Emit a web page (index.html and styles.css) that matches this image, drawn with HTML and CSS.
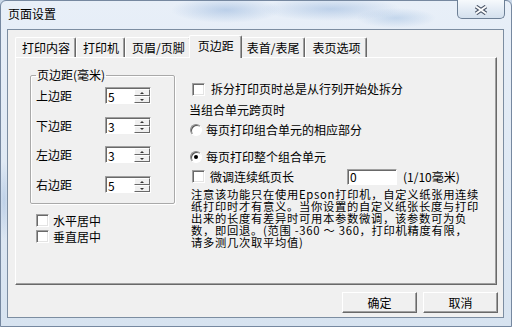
FILE: index.html
```html
<!DOCTYPE html>
<html lang="zh-CN">
<head>
<meta charset="utf-8">
<title>页面设置</title>
<link rel="stylesheet" href="styles.css">
</head>
<body>
<div class="window">
  <div class="titlebar">
    <span class="title">页面设置</span>
    <div class="close">
      <svg width="14" height="10" viewBox="0 0 14 10">
        <path d="M2 1.5 L12 8.5 M12 1.5 L2 8.5" stroke="#4a5567" stroke-width="4" fill="none"/>
        <path d="M2 1.5 L12 8.5 M12 1.5 L2 8.5" stroke="#ffffff" stroke-width="2" fill="none"/>
      </svg>
    </div>
  </div>
  <div class="client">
    <div class="tabs">
      <div class="tab">打印内容</div>
      <div class="tab">打印机</div>
      <div class="tab">页眉/页脚</div>
      <div class="tab active">页边距</div>
      <div class="tab">表首/表尾</div>
      <div class="tab">表页选项</div>
    </div>
    <div class="panel">
      <div class="left">
        <fieldset class="group">
          <legend>页边距(毫米)</legend>
          <div class="row"><span class="lbl">上边距</span><div class="spin"><span class="val">5</span><div class="spinbtns"><div class="sb"><span class="arr up"></span></div><div class="sb"><span class="arr down"></span></div></div></div></div>
          <div class="row"><span class="lbl">下边距</span><div class="spin"><span class="val">3</span><div class="spinbtns"><div class="sb"><span class="arr up"></span></div><div class="sb"><span class="arr down"></span></div></div></div></div>
          <div class="row"><span class="lbl">左边距</span><div class="spin"><span class="val">3</span><div class="spinbtns"><div class="sb"><span class="arr up"></span></div><div class="sb"><span class="arr down"></span></div></div></div></div>
          <div class="row"><span class="lbl">右边距</span><div class="spin"><span class="val">5</span><div class="spinbtns"><div class="sb"><span class="arr up"></span></div><div class="sb"><span class="arr down"></span></div></div></div></div>
        </fieldset>
        <div class="checks">
          <div class="check"><span class="box"></span><span>水平居中</span></div>
          <div class="check"><span class="box"></span><span>垂直居中</span></div>
        </div>
      </div>
      <div class="right">
        <div class="opt cb-row"><span class="box"></span><span>拆分打印页时总是从行列开始处拆分</span></div>
        <div class="opt caption">当组合单元跨页时</div>
        <div class="opt radio-row first"><span class="radio"></span><span>每页打印组合单元的相应部分</span></div>
        <div class="opt radio-row second"><span class="radio on"></span><span>每页打印整个组合单元</span></div>
        <div class="opt tune-row">
          <span class="tune-label"><span class="box"></span><span>微调连续纸页长</span></span>
          <span class="field">0</span>
          <span class="unit">(1/10毫米)</span>
        </div>
        <div class="note">注意该功能只在使用Epson打印机，自定义纸张用连续<br>纸打印时才有意义。当你设置的自定义纸张长度与打印<br>出来的长度有差异时可用本参数微调，该参数可为负<br>数，即回退。(范围 -360 ～ 360，打印机精度有限，<br>请多测几次取平均值)</div>
      </div>
    </div>
    <div class="buttons">
      <div class="btn">确定</div>
      <div class="btn">取消</div>
    </div>
  </div>
</div>
</body>
</html>
```

FILE: styles.css
```css
html, body {
  margin: 0;
  padding: 0;
}
body {
  width: 512px;
  height: 327px;
  overflow: hidden;
  background: #c9d7e8;
  font-family: "Noto Sans CJK SC", "Liberation Sans", sans-serif;
  font-size: 12px;
  color: #000;
}
.window {
  width: 512px;
  height: 327px;
  box-sizing: border-box;
  display: flex;
  flex-direction: column;
  padding: 0 7px 8px 6px;
  border: 1px solid #7688a0;
  border-radius: 6px 6px 0 0;
  background:
    radial-gradient(ellipse 55px 13px at 225px 9px, rgba(120,160,210,0.40), transparent),
    radial-gradient(ellipse 70px 12px at 330px 8px, rgba(120,160,210,0.38), transparent),
    radial-gradient(ellipse 40px 10px at 395px 17px, rgba(130,170,215,0.35), transparent),
    radial-gradient(ellipse 6px 40px at 3px 200px, rgba(130,165,210,0.35), transparent),
    linear-gradient(#e8eff8, #d7e3f0);
}
.titlebar {
  height: 28px;
  display: flex;
  justify-content: space-between;
  align-items: flex-start;
  flex: none;
}
.title {
  line-height: 12px;
  margin-top: 7px;
  padding-left: 1px;
}
.close {
  width: 48px;
  height: 19px;
  box-sizing: border-box;
  margin-top: -1px;
  margin-right: -1px;
  border: 1px solid #6d7f95;
  border-top: none;
  border-radius: 0 0 5px 5px;
  background: linear-gradient(#f6f9fc, #e4ecf5 50%, #d4e0ed);
  display: flex;
  justify-content: center;
  align-items: center;
  padding-top: 2px;
}
.client {
  flex: 1;
  border: 1px solid #7c8da1;
  background: #f0f0f0;
  display: flex;
  flex-direction: column;
}
.tabs {
  display: flex;
  align-items: flex-end;
  height: 22px;
  margin-top: 5px;
  padding-left: 7px;
  flex: none;
}
.tab {
  height: 20px;
  box-sizing: border-box;
  padding: 0 5px 0 6px;
  line-height: 19px;
  border-top: 1px solid #fff;
  border-left: 1px solid #fff;
  border-right: 1px solid #696969;
  box-shadow: inset -1px 0 0 #a0a0a0;
  border-radius: 2px 2px 0 0;
  background: #f0f0f0;
  white-space: nowrap;
}
.tab.active {
  height: 23px;
  margin: 0 -2px -1px -2px;
  padding: 0 7px 0 8px;
  line-height: 20px;
  position: relative;
  z-index: 1;
}
.panel {
  margin-left: 7px;
  width: 482px;
  height: 228px;
  box-sizing: border-box;
  border-top: 1px solid #fff;
  border-left: 1px solid #fff;
  border-right: 1px solid #696969;
  border-bottom: 1px solid #696969;
  box-shadow: inset -1px -1px 0 #a0a0a0;
  display: flex;
  padding-left: 14px;
  flex: none;
}
.left {
  width: 145px;
  flex: none;
  padding-top: 11px;
}
.group {
  margin: 0;
  padding: 0 0 10px 5px;
  border: 1px solid #a9a9a9;
  box-shadow: inset 1px 1px 0 #fff, 1px 1px 0 #fff;
  border-radius: 2px;
  min-width: 0;
  width: 145px;
  box-sizing: border-box;
}
.group legend {
  padding: 0 1px;
  margin: 0;
  line-height: 12px;
}
.row {
  display: flex;
  align-items: center;
  height: 17px;
  margin-top: 12.7px;
}
.row:first-of-type {
  margin-top: 6px;
}
.lbl {
  width: 69px;
  line-height: 17px;
}
.spin {
  width: 46px;
  height: 17px;
  box-sizing: border-box;
  border: 1px solid;
  border-color: #a0a0a0 #fff #fff #a0a0a0;
  box-shadow: inset 1px 1px 0 #696969;
  background: #fff;
  display: flex;
  padding: 1px 0 0 1px;
}
.val {
  flex: 1;
  line-height: 15px;
  padding-left: 1px;
}
.spinbtns {
  width: 16px;
  display: flex;
  flex-direction: column;
}
.sb {
  flex: 1;
  box-sizing: border-box;
  border: 1px solid;
  border-color: #fff #696969 #696969 #fff;
  background: #f0f0f0;
  display: flex;
  justify-content: center;
  align-items: center;
}
.arr {
  width: 0;
  height: 0;
  border-left: 2px solid transparent;
  border-right: 2px solid transparent;
}
.arr.up {
  border-bottom: 2px solid #333;
}
.arr.down {
  border-top: 2px solid #333;
}
.checks {
  margin-top: 10px;
  padding-left: 6px;
  display: flex;
  flex-direction: column;
  gap: 3px;
}
.check {
  display: flex;
  align-items: center;
  gap: 4px;
  height: 13px;
  line-height: 13px;
}
.box {
  width: 13px;
  height: 13px;
  box-sizing: border-box;
  border: 1px solid;
  border-color: #a0a0a0 #fff #fff #a0a0a0;
  box-shadow: inset 1px 1px 0 #696969, inset -1px -1px 0 #e3e3e3;
  background: #fff;
  flex: none;
}
.right {
  margin-left: 14px;
  padding-top: 23px;
  display: flex;
  flex-direction: column;
}
.opt {
  display: flex;
  align-items: center;
  height: 16px;
  line-height: 16px;
  white-space: nowrap;
}
.cb-row .box {
  margin-left: 3px;
  margin-right: 6px;
}
.caption {
  margin-top: 5px;
}
.radio-row.first {
  margin-top: 4px;
}
.radio-row.second {
  margin-top: 11px;
}
.radio {
  width: 12px;
  height: 12px;
  box-sizing: border-box;
  margin-left: 1px;
  margin-right: 4px;
  border-radius: 50%;
  border: 1px solid;
  border-color: #8a8a8a #fff #fff #8a8a8a;
  box-shadow: inset 1px 1px 0 #555;
  background: #fff;
  display: flex;
  justify-content: center;
  align-items: center;
  flex: none;
}
.radio.on::after {
  content: "";
  width: 4px;
  height: 4px;
  border-radius: 50%;
  background: #000;
}
.tune-row {
  margin-top: 3px;
  height: 17px;
}
.tune-label {
  width: 158px;
  display: flex;
  align-items: center;
}
.tune-label .box {
  margin-left: 3px;
  margin-right: 5px;
}
.field {
  width: 50px;
  height: 16px;
  box-sizing: border-box;
  border: 1px solid;
  border-color: #a0a0a0 #fff #fff #a0a0a0;
  box-shadow: inset 1px 1px 0 #696969;
  background: #fff;
  line-height: 14px;
  padding-left: 2px;
}
.unit {
  margin-left: 6px;
}
.note {
  margin-top: 4px;
  margin-left: 2px;
  font-size: 11.3px;
  letter-spacing: 0.7px;
  line-height: 11.9px;
  white-space: nowrap;
}
.buttons {
  display: flex;
  justify-content: flex-end;
  gap: 6px;
  margin-top: 7px;
  padding-right: 5px;
  flex: none;
}
.btn {
  width: 75px;
  height: 21px;
  box-sizing: border-box;
  border: 1px solid;
  border-color: #fff #696969 #696969 #fff;
  box-shadow: inset -1px -1px 0 #a0a0a0;
  background: #f0f0f0;
  text-align: center;
  line-height: 19px;
}
```
